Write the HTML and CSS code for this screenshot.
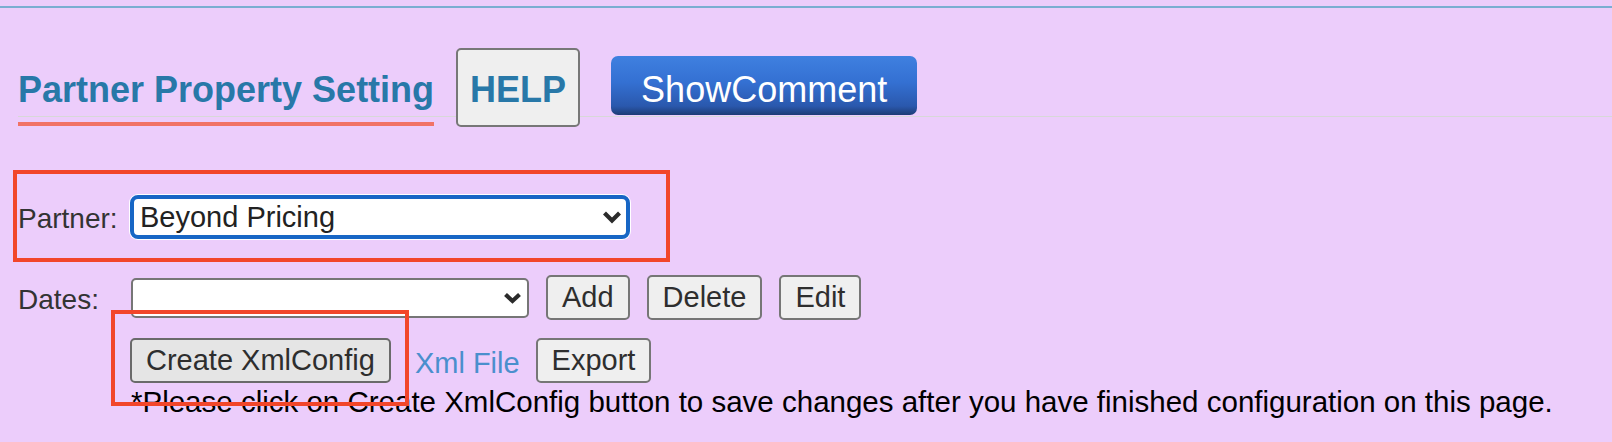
FILE: index.html
```html
<!DOCTYPE html>
<html lang="en">

<head>
  <meta charset="UTF-8">
  <meta name="viewport" content="width=device-width, initial-scale=1.0">
  <title>Partner Property Setting</title>
  <link rel="stylesheet" href="styles.css">
</head>

<body>
  <div class="top-rule"></div>

  <div class="page-head">
    <h2 class="page-title">Partner Property Setting</h2>
    <button type="button" class="help-btn">HELP</button>
    <button type="button" class="comment-btn">ShowComment</button>
  </div>

  <form class="settings">
    <div class="row">
      <label for="partner">Partner:</label>
      <span class="select-wrap">
        <select id="partner" class="select select-partner">
          <option>Beyond Pricing</option>
        </select>
        <svg class="chevron chevron-partner" width="20" height="14" viewBox="0 0 20 14">
          <path d="M2.5 3 L10 10.5 L17.5 3" />
        </svg>
      </span>
    </div>

    <div class="row row-dates">
      <label for="dates">Dates:</label>
      <span class="select-wrap">
        <select id="dates" class="select select-dates"></select>
        <svg class="chevron chevron-dates" width="19" height="12" viewBox="0 0 19 12">
          <path d="M2.5 2.5 L9.5 9 L16.5 2.5" />
        </svg>
      </span>
      <button type="button" class="btn">Add</button>
      <button type="button" class="btn">Delete</button>
      <button type="button" class="btn">Edit</button>
    </div>

    <div class="row row-actions">
      <button type="button" class="btn btn-create">Create XmlConfig</button>
      <a href="#" class="xml-link">Xml File</a>
      <button type="button" class="btn btn-export">Export</button>
    </div>

    <p class="note">*Please click on Create XmlConfig button to save changes after you have finished configuration on this page.</p>
  </form>

  <!-- red markup boxes drawn over the screenshot -->
  <div class="mark mark-partner"></div>
  <div class="mark mark-create"></div>
</body>

</html>
```

FILE: styles.css
```css
body {
  margin: 0;
  background-color: #eccdfb;
  font-family: "Liberation Sans", Arial, sans-serif;
  color: #333;
}

.top-rule {
  height: 2px;
  margin-top: 6px;
  background-color: #7aaed1;
}

/* Header with tab-like title */
.page-head {
  display: flex;
  align-items: flex-end;
  margin: 40px 0 0 18px;
  border-bottom: 1px solid #d8d8d8;
}

.page-title {
  margin: 0 0 -10px;
  padding-bottom: 12px;
  font-size: 36px;
  line-height: 41px;
  font-weight: bold;
  color: #2878a8;
  border-bottom: 4px solid #f17266;
}

.help-btn {
  height: 79px;
  margin: 0 0 -11px 22px;
  padding: 4px 12px 0;
  font-family: inherit;
  font-size: 36px;
  line-height: 41px;
  font-weight: bold;
  color: #2878a8;
  background-color: #efefef;
  border: 2px solid #777;
  border-radius: 5px;
}

.comment-btn {
  height: 59px;
  margin: 0 0 1px 31px;
  padding: 8px 30px 0;
  font-family: inherit;
  font-size: 36px;
  line-height: 41px;
  color: #fff;
  border: none;
  border-radius: 7px;
  background: linear-gradient(#3f80e0, #3470d2 45%, #2a58ad 85%, #1d3b74);
}

/* Form rows */
.settings {
  margin-top: 78px;
  padding-left: 18px;
}

.row {
  display: flex;
  align-items: center;
}

.row label {
  width: 112px;
  padding-top: 4px;
  font-size: 28px;
  line-height: 32px;
}

.row-dates {
  margin-top: 36px;
}

.row-actions {
  margin-top: 18px;
  padding-left: 112px;
}

.select-wrap {
  position: relative;
  display: inline-flex;
}

.select {
  appearance: none;
  -webkit-appearance: none;
  box-sizing: border-box;
  font-family: inherit;
  font-size: 29px;
  color: #222;
  background-color: #fff;
}

.select-partner {
  width: 500px;
  height: 44px;
  padding: 0 40px 0 6px;
  border: 4px solid #1766c5;
  border-radius: 8px;
  box-shadow: 0 0 0 1px #fff;
  outline: none;
}

.select-dates {
  width: 398px;
  height: 40px;
  margin-left: 1px;
  padding: 0 36px 0 8px;
  border: 2px solid #767676;
  border-radius: 5px;
}

.chevron {
  position: absolute;
  top: 50%;
  transform: translateY(-50%);
  pointer-events: none;
}

.chevron path {
  fill: none;
  stroke: #2b2b2b;
  stroke-width: 4.2;
}

.chevron-partner {
  right: 8px;
}

.chevron-dates {
  right: 7px;
}

.btn {
  box-sizing: border-box;
  height: 45px;
  margin-left: 17px;
  padding: 0 14px;
  font-family: inherit;
  font-size: 29px;
  color: #2e2e2e;
  background-color: #efefef;
  border: 2px solid #767676;
  border-radius: 5px;
}

.btn-create {
  margin-left: 0;
  background-color: #e5e5e5;
  border-color: #6a6a6a;
}

.xml-link {
  margin-left: 24px;
  padding-top: 4px;
  font-size: 29px;
  line-height: 32px;
  color: #4a8fcd;
  text-decoration: none;
}

.btn-export {
  margin-left: 16px;
}

.note {
  margin: 2px 0 0;
  padding-left: 113px;
  font-size: 29.5px;
  line-height: 34px;
  color: #000;
}

/* Annotation boxes */
.mark {
  position: absolute;
  box-sizing: border-box;
  border: 4px solid #f2462a;
}

.mark-partner {
  left: 13px;
  top: 170px;
  width: 657px;
  height: 92px;
}

.mark-create {
  left: 111px;
  top: 310px;
  width: 298px;
  height: 96px;
}
```
